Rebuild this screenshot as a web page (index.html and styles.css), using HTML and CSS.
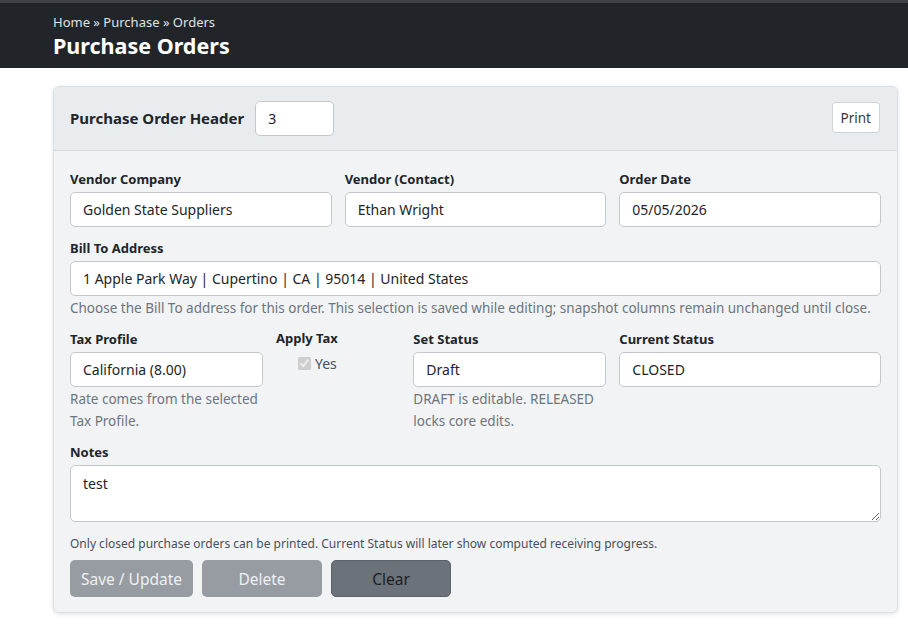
FILE: index.html
```html
<!DOCTYPE html>
<html lang="en">
<head>
  <meta charset="UTF-8">
  <meta name="viewport" content="width=device-width, initial-scale=1.0">
  <title>Purchase Orders</title>
  <link rel="stylesheet" href="styles.css">
</head>
<body>
  <header class="topbar">
    <div class="container">
      <div class="crumbs">Home &raquo; Purchase &raquo; Orders</div>
      <h1>Purchase Orders</h1>
    </div>
  </header>

  <main class="container">
    <form class="card">
      <div class="card-header">
        <label class="header-title" for="po-id">Purchase Order Header</label>
        <input type="text" id="po-id" class="field id-field" value="3">
        <button type="button" class="btn-print">Print</button>
      </div>

      <div class="card-body">
        <div class="row row-first">
          <div class="col-4">
            <label for="vendor">Vendor Company</label>
            <input type="text" id="vendor" class="field" value="Golden State Suppliers">
          </div>
          <div class="col-4">
            <label for="contact">Vendor (Contact)</label>
            <input type="text" id="contact" class="field" value="Ethan Wright">
          </div>
          <div class="col-4">
            <label for="order-date">Order Date</label>
            <input type="text" id="order-date" class="field" value="05/05/2026">
          </div>
        </div>

        <div class="row">
          <div class="col-12">
            <label for="bill-to">Bill To Address</label>
            <input type="text" id="bill-to" class="field" value="1 Apple Park Way | Cupertino | CA | 95014 | United States">
            <div class="help">Choose the Bill To address for this order. This selection is saved while editing; snapshot columns remain unchanged until close.</div>
          </div>
        </div>

        <div class="row">
          <div class="col-3">
            <label for="tax-profile">Tax Profile</label>
            <input type="text" id="tax-profile" class="field" value="California (8.00)">
            <div class="help">Rate comes from the selected Tax Profile.</div>
          </div>
          <div class="col-2">
            <label class="apply-label">Apply Tax</label>
            <div class="check">
              <input type="checkbox" id="apply-tax" checked disabled>
              <label for="apply-tax">Yes</label>
            </div>
          </div>
          <div class="col-3">
            <label for="set-status">Set Status</label>
            <input type="text" id="set-status" class="field" value="Draft">
            <div class="help">DRAFT is editable. RELEASED locks core edits.</div>
          </div>
          <div class="col-4">
            <label for="cur-status">Current Status</label>
            <input type="text" id="cur-status" class="field" value="CLOSED">
          </div>
        </div>

        <div class="row">
          <div class="col-12">
            <label for="notes">Notes</label>
            <textarea id="notes" class="field notes">test</textarea>
          </div>
        </div>

        <p class="note">Only closed purchase orders can be printed. Current Status will later show computed receiving progress.</p>

        <div class="actions">
          <button type="button" class="btn btn-muted btn-save" disabled>Save / Update</button>
          <button type="button" class="btn btn-muted btn-delete" disabled>Delete</button>
          <button type="button" class="btn btn-clear">Clear</button>
        </div>
      </div>
    </form>
  </main>
</body>
</html>
```

FILE: styles.css
```css
body {
  margin: 0;
  background-color: #fff;
  color: #212529;
  font-family: 'Noto Sans', 'Open Sans', sans-serif;
  font-size: 14px;
}

.container {
  margin-left: 53px;
  margin-right: 10px;
}

/*---------------------------------- TOP BAR ----------------------------------*/
.topbar {
  background-color: #212529;
  border-top: 3px solid #3e4246;
  height: 65px;
  color: #fff;
}

.topbar .container {
  padding-top: 10px;
}

.crumbs {
  font-size: 13px;
  line-height: 18px;
  color: #dee2e6;
}

.topbar h1 {
  margin: 0;
  font-size: 21.5px;
  line-height: 29px;
  font-weight: 700;
}

/*---------------------------------- CARD ----------------------------------*/
main.container {
  padding-top: 18px;
  padding-bottom: 20px;
}

.card {
  border: 1px solid #dcdfe3;
  border-radius: 6px;
  background-color: #f2f3f5;
  box-shadow: 0 1px 4px rgba(0, 0, 0, 0.12);
  overflow: hidden;
}

.card-header {
  display: flex;
  align-items: center;
  gap: 8px;
  padding: 14px 17px 14px 16px;
  background-color: #e9ecef;
  border-bottom: 1px solid #d5d9dd;
}

.header-title {
  font-size: 15px;
  font-weight: 700;
  white-space: nowrap;
  margin: 0 3px 0 0;
}

.card-header .id-field {
  flex: none;
  width: 79px;
  height: 35px;
}

.btn-print {
  margin-left: auto;
  margin-top: -2px;
  height: 31px;
  padding: 0 8px;
  border: 1px solid #ced4da;
  border-radius: 4px;
  background-color: #fff;
  color: #343a40;
  font-family: inherit;
  font-size: 13.5px;
}

.card-body {
  padding: 18px 16px 15px;
}

/*---------------------------------- FORM GRID ----------------------------------*/
.row {
  display: grid;
  grid-template-columns: repeat(12, 1fr);
  column-gap: 13px;
  margin-bottom: 10px;
}

.row-first {
  margin-bottom: 11px;
}

.col-2 { grid-column: span 2; }
.col-3 { grid-column: span 3; }
.col-4 { grid-column: span 4; }
.col-12 { grid-column: span 12; }

label {
  display: block;
  font-weight: 700;
  font-size: 13px;
  line-height: 21px;
  margin-bottom: 2px;
}

.field {
  display: block;
  box-sizing: border-box;
  width: 100%;
  height: 35px;
  padding: 0 12px;
  border: 1px solid #c4c8cd;
  border-radius: 5px;
  background-color: #fff;
  color: #212529;
  font-family: inherit;
  font-size: 14px;
}

.notes {
  height: 57px;
  padding-top: 8px;
  resize: vertical;
}

.help {
  margin-top: 1px;
  font-size: 13.5px;
  line-height: 22px;
  color: #6c757d;
}

.apply-label {
  margin-bottom: 4px;
  margin-top: -1px;
}

.check {
  display: flex;
  align-items: center;
  gap: 4px;
  padding-left: 22px;
}

.check input {
  margin: 0;
  width: 13px;
  height: 13px;
}

.check label {
  font-weight: 400;
  font-size: 14px;
  color: #495057;
  margin: 0;
}

.note {
  margin: 12px 0 6px;
  font-size: 12px;
  line-height: 20px;
  color: #495057;
}

/*---------------------------------- BUTTONS ----------------------------------*/
.actions {
  display: flex;
  gap: 9px;
}

.btn {
  height: 37px;
  border: none;
  border-radius: 5px;
  font-family: inherit;
  font-size: 15.5px;
  cursor: pointer;
}

.btn-muted {
  background-color: #979ca3;
  color: #eef0f2;
}

.btn-save { width: 123px; }
.btn-delete { width: 120px; }

.btn-clear {
  width: 120px;
  background-color: #6c727a;
  color: #1c1f22;
  border: 1px solid #5c6168;
}
```
